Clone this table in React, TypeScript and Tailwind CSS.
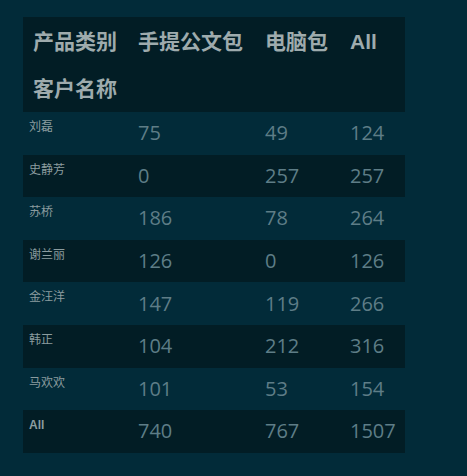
import React from 'react';

const rows = [
  { name: '刘磊', a: 75, b: 49, all: 124 },
  { name: '史静芳', a: 0, b: 257, all: 257 },
  { name: '苏桥', a: 186, b: 78, all: 264 },
  { name: '谢兰丽', a: 126, b: 0, all: 126 },
  { name: '金汪洋', a: 147, b: 119, all: 266 },
  { name: '韩正', a: 104, b: 212, all: 316 },
  { name: '马欢欢', a: 101, b: 53, all: 154 },
  { name: 'All', a: 740, b: 767, all: 1507, total: true },
];

const font = { fontFamily: '"Open Sans", "Noto Sans CJK SC", sans-serif' };

const App = () => {
  return (
    <div className="w-[467px] h-[476px] bg-[#022b39] pt-[17px] pl-[23px]" style={font}>
      <div className="w-[382px]">
        {/* header */}
        <div className="bg-[#021d25] text-[#9eabad] font-bold text-[21px]">
          <div className="grid grid-cols-[105px_127px_85px_65px] h-[47px] items-center pt-[3px]">
            <div className="pl-[10px]">产品类别</div>
            <div className="pl-[10px]">手提公文包</div>
            <div className="pl-[10px]">电脑包</div>
            <div className="pl-[10px] font-['Liberation_Sans']">All</div>
          </div>
          <div className="grid grid-cols-[105px_127px_85px_65px] h-[48px] items-center pt-[2px]">
            <div className="pl-[10px]">客户名称</div>
          </div>
        </div>

        {/* body */}
        {rows.map((row, i) => (
          <div
            key={row.name}
            className={`grid grid-cols-[105px_127px_85px_65px] h-[42.6px] ${
              i % 2 === 1 ? 'bg-[#021d25]' : 'bg-[#022b39]'
            }`}
          >
            <div
              className={`pl-[6px] pt-[8px] text-[12px] leading-[14px] text-[#8b9c9f] ${
                row.total ? "font-bold font-['Liberation_Sans']" : ''
              }`}
            >
              {row.name}
            </div>
            <div className="pl-[10px] flex items-center text-[20px] text-[#5e7d87]">{row.a}</div>
            <div className="pl-[10px] flex items-center text-[20px] text-[#5e7d87]">{row.b}</div>
            <div className="pl-[10px] flex items-center text-[20px] text-[#5e7d87]">{row.all}</div>
          </div>
        ))}
      </div>
    </div>
  );
};

export default App;
